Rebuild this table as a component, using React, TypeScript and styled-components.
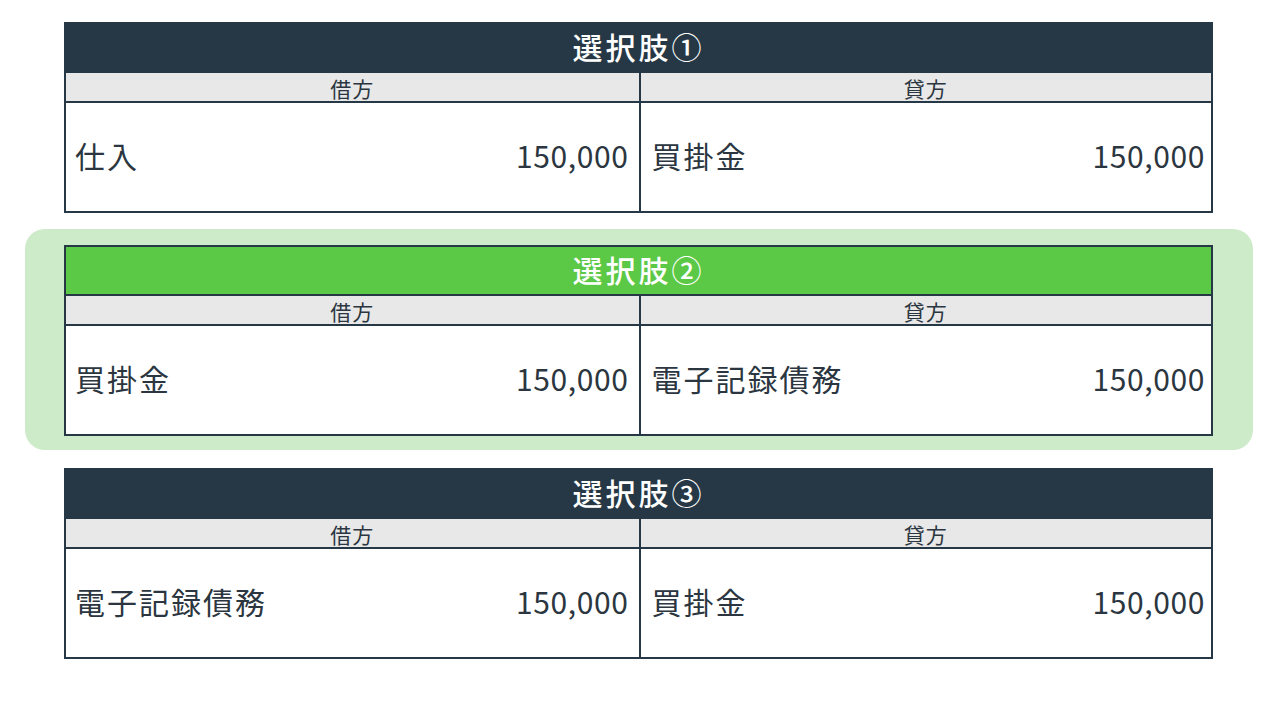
import React from 'react';
import styled, { createGlobalStyle } from 'styled-components';

const ink = '#263845';

const GlobalStyle = createGlobalStyle`
  html, body {
    margin: 0;
    padding: 0;
    background: #ffffff;
  }
  body {
    font-family: 'Noto Sans CJK JP', 'Noto Sans', sans-serif;
    color: #2b3640;
  }
`;

const Page = styled.div`
  width: 1280px;
  padding-top: 6px;
  display: flex;
  flex-direction: column;
  gap: 2px;
`;

const Option = styled.div<{ $selected?: boolean }>`
  margin-left: 25px;
  width: 1228px;
  box-sizing: border-box;
  padding: 16px 40px 14px 39px;
  border-radius: 20px;
  background: ${(p) => (p.$selected ? '#cdebc9' : 'transparent')};
`;

const Table = styled.div`
  border: 2px solid ${ink};
  background: #ffffff;
`;

const Title = styled.div<{ $selected?: boolean }>`
  height: 49px;
  box-sizing: border-box;
  padding-bottom: 4px;
  border-bottom: 2px solid ${ink};
  background: ${(p) => (p.$selected ? '#5bc846' : ink)};
  color: #ffffff;
  font-size: 30px;
  font-weight: 500;
  letter-spacing: 3px;
  display: flex;
  align-items: center;
  justify-content: center;
`;

const Columns = styled.div`
  display: grid;
  grid-template-columns: 1fr 1fr;
`;

const SubHead = styled.div<{ $right?: boolean }>`
  height: 28px;
  background: #e8e8e8;
  border-bottom: 2px solid ${ink};
  border-left: ${(p) => (p.$right ? `2px solid ${ink}` : 'none')};
  font-size: 21px;
  letter-spacing: 1px;
  line-height: 30px;
  text-align: center;
  color: #2b3640;
  overflow: hidden;
`;

const Cell = styled.div<{ $right?: boolean }>`
  height: 108px;
  box-sizing: border-box;
  display: flex;
  align-items: center;
  justify-content: space-between;
  padding: 0 ${(p) => (p.$right ? '6px' : '10px')} 5px
    ${(p) => (p.$right ? '11px' : '9px')};
  border-left: ${(p) => (p.$right ? `2px solid ${ink}` : 'none')};
  font-size: 30px;
  color: #2b3640;
`;

const Account = styled.span`
  letter-spacing: 2px;
`;

const Amount = styled.span`
  letter-spacing: 0.6px;
`;

interface Choice {
  title: string;
  debit: string;
  credit: string;
  amount: string;
  selected?: boolean;
}

const choices: Choice[] = [
  { title: '選択肢①', debit: '仕入', credit: '買掛金', amount: '150,000' },
  {
    title: '選択肢②',
    debit: '買掛金',
    credit: '電子記録債務',
    amount: '150,000',
    selected: true,
  },
  { title: '選択肢③', debit: '電子記録債務', credit: '買掛金', amount: '150,000' },
];

export default function App() {
  return (
    <>
      <GlobalStyle />
      <Page>
        {choices.map((c) => (
          <Option key={c.title} $selected={c.selected}>
            <Table>
              <Title $selected={c.selected}>{c.title}</Title>
              <Columns>
                <SubHead>借方</SubHead>
                <SubHead $right>貸方</SubHead>
                <Cell>
                  <Account>{c.debit}</Account>
                  <Amount>{c.amount}</Amount>
                </Cell>
                <Cell $right>
                  <Account>{c.credit}</Account>
                  <Amount>{c.amount}</Amount>
                </Cell>
              </Columns>
            </Table>
          </Option>
        ))}
      </Page>
    </>
  );
}
